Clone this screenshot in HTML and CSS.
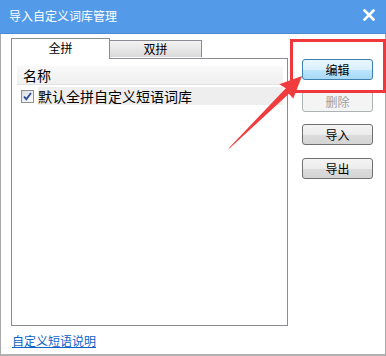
FILE: index.html
```html
<!DOCTYPE html>
<html lang="zh">
<head>
<meta charset="utf-8">
<title>导入自定义词库管理</title>
<link rel="stylesheet" href="styles.css">
</head>
<body>
<div class="window">
  <div class="titlebar">
    <span class="title">导入自定义词库管理</span>
    <svg class="close" width="12" height="12" viewBox="0 0 12 12"><path d="M1.5 1.5 L10.5 10.5 M10.5 1.5 L1.5 10.5" stroke="#fff" stroke-width="2.6" stroke-linecap="square"/></svg>
  </div>
  <div class="main">
    <div class="left">
      <div class="tabs">
        <div class="tab active">全拼</div>
        <div class="tab">双拼</div>
      </div>
      <div class="panel">
        <div class="list">
          <div class="list-head">名称</div>
          <div class="list-row">
            <svg class="check" width="13" height="13" viewBox="0 0 13 13">
              <defs><linearGradient id="cb" x1="0" y1="0" x2="1" y2="1"><stop offset="0" stop-color="#dcdcdc"/><stop offset="1" stop-color="#ffffff"/></linearGradient></defs>
              <rect x="0.5" y="0.5" width="12" height="12" fill="url(#cb)" stroke="#8e8f8f"/>
              <path d="M3 6.5 L5.3 9.2 L10 3" fill="none" stroke="#2a4a9e" stroke-width="1.8"/>
            </svg>
            <span class="row-text">默认全拼自定义短语词库</span>
          </div>
        </div>
      </div>
      <a class="link" href="#">自定义短语说明</a>
    </div>
    <div class="right">
      <button class="btn primary">编辑</button>
      <button class="btn disabled">删除</button>
      <button class="btn b3">导入</button>
      <button class="btn b4">导出</button>
    </div>
  </div>
  <div class="highlight"></div>
  <svg class="arrow" width="386" height="356" viewBox="0 0 386 356">
    <polygon points="228.6,148.4 229.4,147.6 285.8,88.2 279.3,84.3 302,76 293.3,98.5 288.9,93.8 229.4,148.6" fill="#f03c3c"/>
  </svg>
</div>
</body>
</html>
```
FILE: styles.css
```css
* { box-sizing: border-box; }
html, body { margin: 0; padding: 0; }
body {
  width: 386px;
  height: 356px;
  background: #fff;
  font-family: "Noto Sans CJK SC", "Liberation Sans", sans-serif;
  font-size: 12px;
  color: #000;
}
.window {
  position: relative;
  width: 386px;
  height: 356px;
  border-left: 1px solid #a9a9a9;
  border-right: 1px solid #a9a9a9;
  border-bottom: 2px solid #b0b0b0;
  display: flex;
  flex-direction: column;
}
.titlebar {
  height: 34px;
  margin: 0 -1px;
  background: #539be9;
  border-bottom: 1px solid #4a8ad2;
  color: #fff;
  display: flex;
  align-items: center;
  justify-content: space-between;
  padding: 0 11px 0 9px;
  font-size: 12px;
}
.title { line-height: 1; margin-top: -1px; }
.close { display: block; margin-top: -3px; }
.main {
  display: flex;
  flex: 1;
}
.left {
  padding: 4px 0 0 10px;
  width: 287px;
  display: flex;
  flex-direction: column;
}
.tabs {
  display: flex;
  align-items: flex-end;
  height: 20px;
  position: relative;
  z-index: 1;
}
.tab {
  height: 17px;
  width: 92px;
  border: 1px solid #898c95;
  border-bottom: none;
  background: linear-gradient(#f3f3f3, #dadada);
  text-align: center;
  line-height: 16px;
  margin-bottom: 1px;
}
.tab.active {
  width: 99px;
  height: 21px;
  margin-bottom: -1px;
  background: #fff;
  line-height: 18px;
}
.tabs .tab + .tab { border-left: none; }
.panel {
  height: 268px;
  border: 1px solid #898c95;
  padding: 7px 4px 0 5px;
}
.list-head {
  height: 19px;
  background: linear-gradient(#f9f9f9, #f0f0f0);
  border-bottom: 1px solid #e2e2e2;
  padding-left: 6px;
  line-height: 19px;
  font-size: 14px;
}
.list-row {
  margin-top: 2px;
  height: 18px;
  display: flex;
  align-items: center;
}
.check { margin: 0 4px 0 4px; flex: none; }
.row-text {
  flex: 1;
  height: 18px;
  background: #eeeeee;
  line-height: 18px;
  font-size: 14px;
}
.link {
  margin-top: 7px;
  margin-left: 1px;
  color: #0c62c8;
  text-decoration: underline;
  font-size: 12px;
  line-height: 16px;
}
.right {
  display: flex;
  flex-direction: column;
  padding: 25px 0 0 14px;
}
.btn {
  width: 71px;
  height: 21px;
  border: 1px solid #707070;
  border-radius: 3px;
  background: linear-gradient(#f4f4f4 0%, #ececec 50%, #dcdcdc 52%, #d4d4d4 100%);
  font-family: inherit;
  font-size: 12px;
  color: #000;
  padding: 0;
  line-height: 19px;
}
.btn.primary {
  border-color: #3c7fb1;
  background: linear-gradient(#eaf6fd 0%, #d9f0fc 50%, #bee6fd 52%, #a7d9f5 100%);
}
.btn.disabled {
  margin-top: 11px;
  border-color: #adb2b5;
  background: #f4f4f4;
  color: #a0a0a0;
}
.btn.b3 { margin-top: 12px; }
.btn.b4 { margin-top: 13px; }
.highlight {
  position: absolute;
  left: 289px;
  top: 39px;
  width: 96px;
  height: 54px;
  border: 3px solid #f0383c;
}
.arrow {
  position: absolute;
  left: -1px;
  top: 0;
  pointer-events: none;
}
```
